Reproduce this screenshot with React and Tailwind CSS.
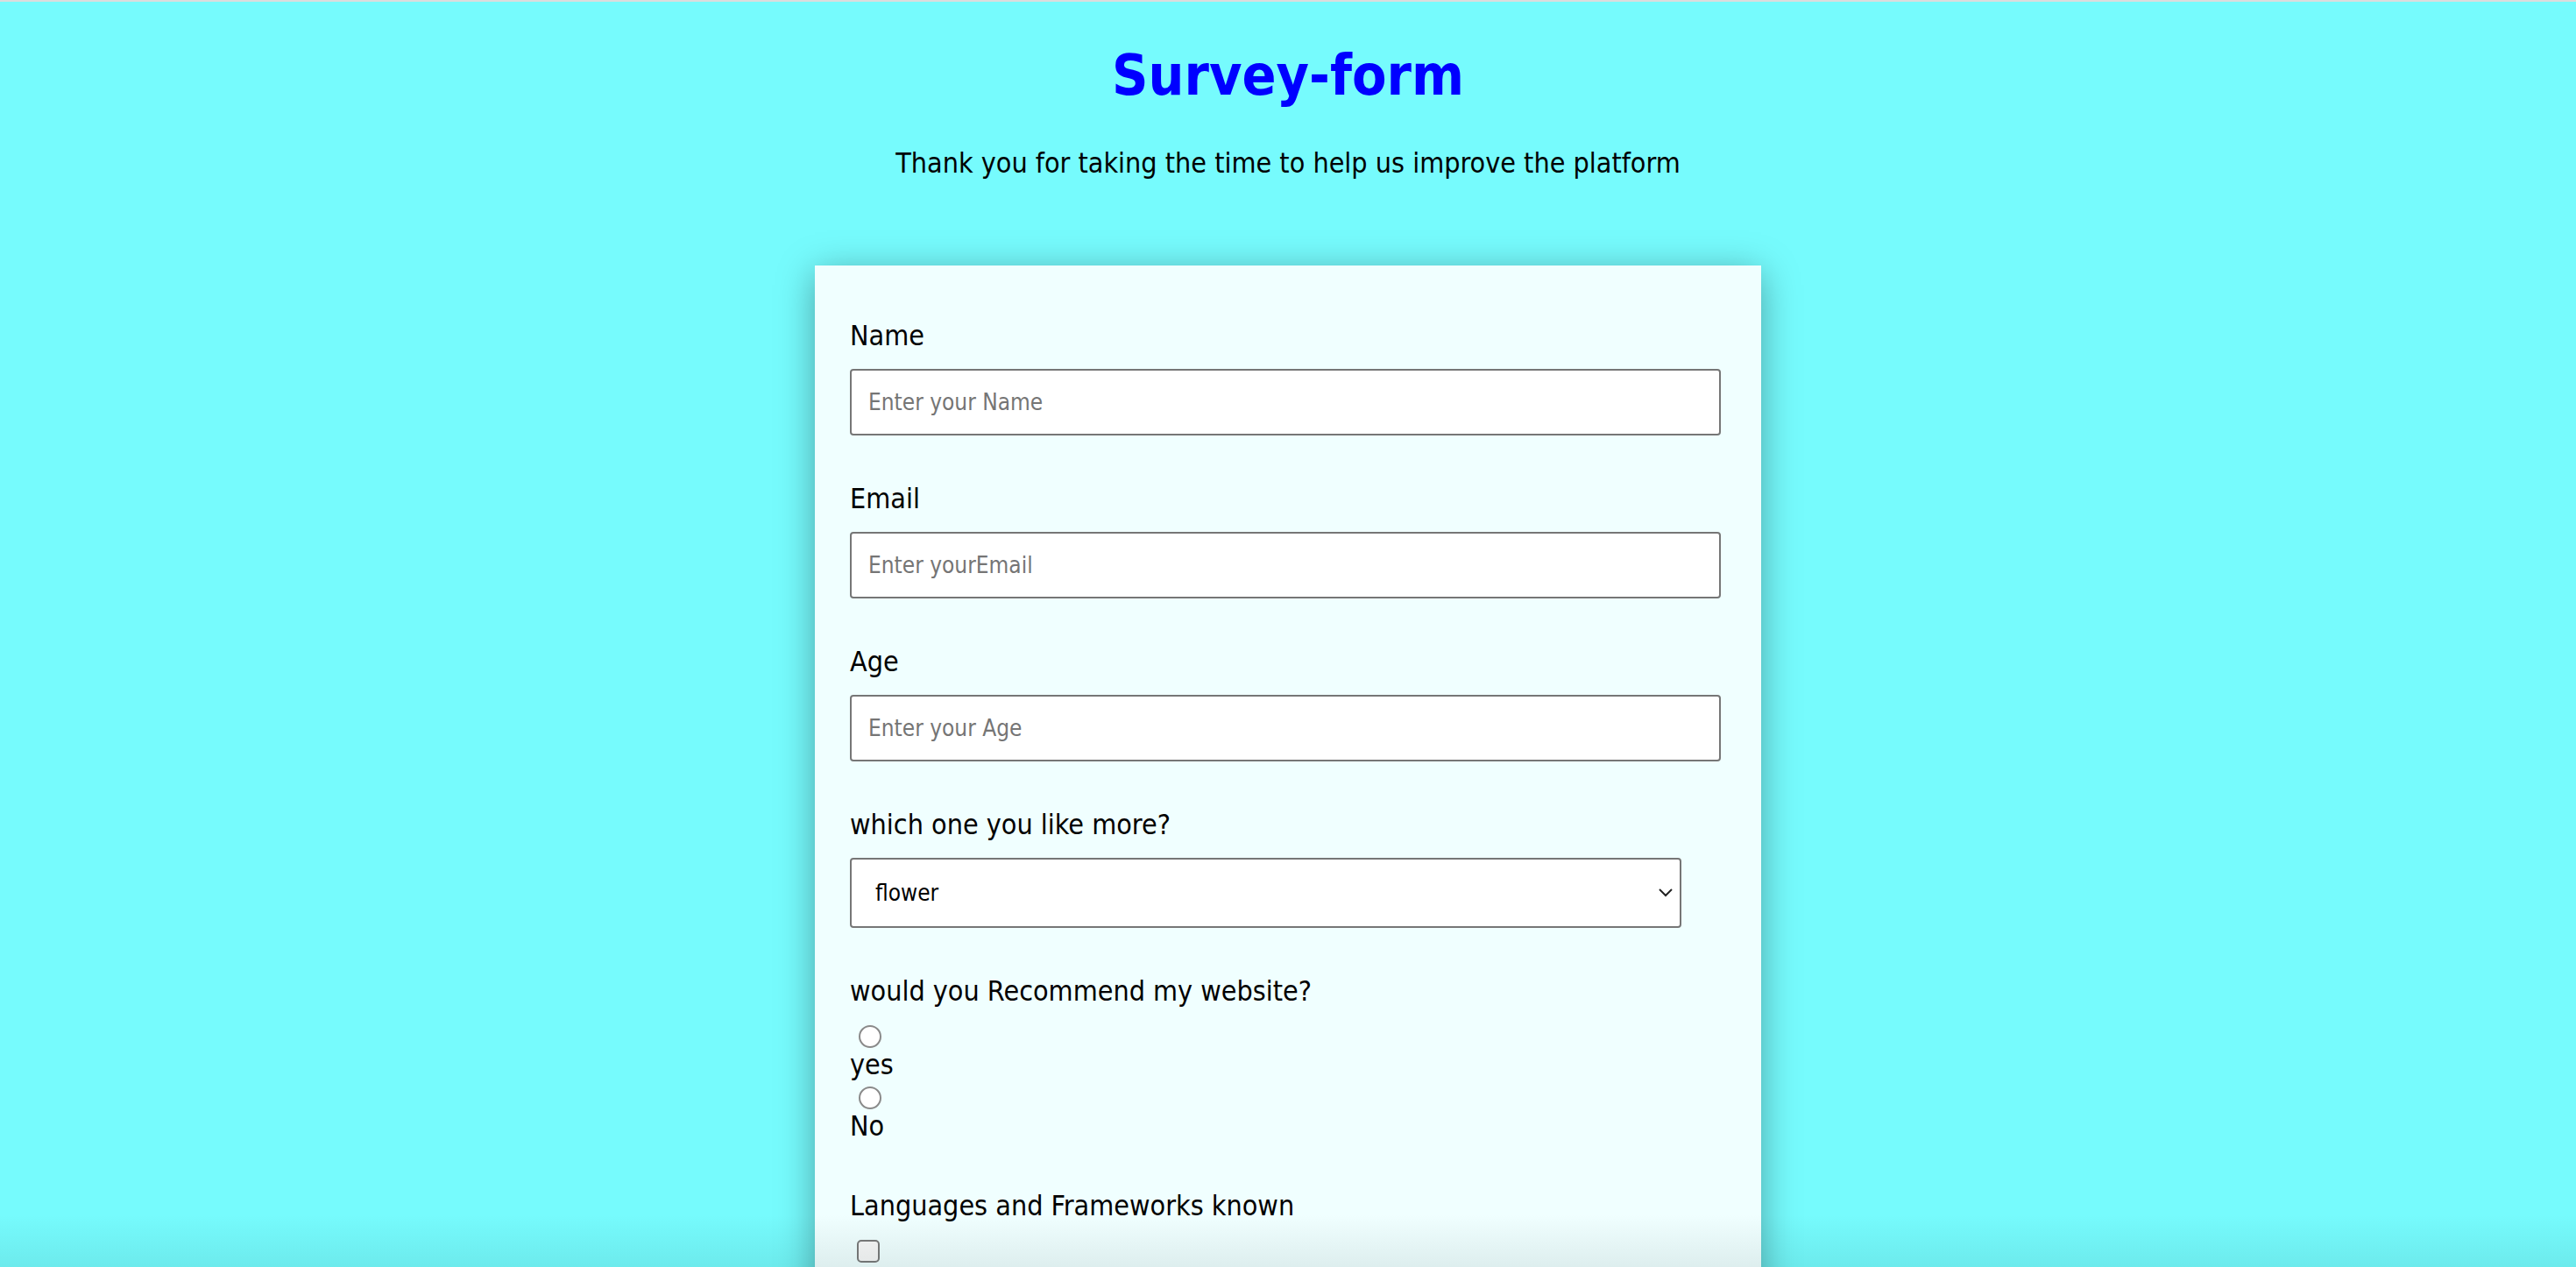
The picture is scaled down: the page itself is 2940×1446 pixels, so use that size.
import React from 'react';

const font = { fontFamily: '"DejaVu Sans Condensed", "DejaVu Sans", Tahoma, sans-serif' };

const TextField = ({ label, placeholder, type = 'text' }) => (
  <div className="flex flex-col">
    <label className="text-[32px] leading-[38px] text-black">{label}</label>
    <input
      type={type}
      placeholder={placeholder}
      className="mt-[19px] h-[76px] w-[994px] rounded-[4px] border-2 border-[#767676] bg-white pl-[19px] text-[26px] text-black placeholder:text-[#757575] outline-none"
    />
  </div>
);

const Radio = ({ name, label }) => (
  <>
    <input
      type="radio"
      name={name}
      className="mt-[6px] ml-[10px] block h-[26px] w-[26px] appearance-none rounded-full border-2 border-[#8a8a8a] bg-white"
    />
    <span className="block text-[32px] leading-[38px]">{label}</span>
  </>
);

const Check = ({ label }) => (
  <label className="flex items-center gap-3 text-[32px] leading-[38px]">
    <input
      type="checkbox"
      className="mt-[6px] ml-[8px] block h-[26px] w-[26px] appearance-none rounded-[5px] border-2 border-[#7a7a7a] bg-[#f7f7f7]"
    />
    <span>{label}</span>
  </label>
);

export default function App() {
  return (
    <div
      className="relative h-screen overflow-hidden border-t-2 border-[#dcdcdc] bg-[#76fbfd] text-black"
      style={font}
    >
      {/* Header */}
      <header className="flex flex-col items-center pt-[52px]">
        <h1 className="text-[64px] font-bold leading-none text-[#0000ff]">Survey-form</h1>
        <p className="mt-[49px] text-[32px] leading-[38px]">
          Thank you for taking the time to help us improve the platform
        </p>
      </header>

      {/* Form card */}
      <form className="mx-auto mt-[98px] w-[1080px] bg-[#f0ffff] px-[40px] pt-[61px] pb-[80px] shadow-[0_8px_40px_rgba(0,0,0,0.35)]">
        <div className="flex flex-col gap-[53px]">
          <TextField label="Name" placeholder="Enter your Name" />
          <TextField label="Email" placeholder="Enter yourEmail" type="email" />
          <TextField label="Age" placeholder="Enter your Age" type="number" />

          <div className="flex flex-col">
            <label className="text-[32px] leading-[38px]">which one you like more?</label>
            <div className="relative mt-[19px] w-[949px]">
              <select className="h-[80px] w-full appearance-none rounded-[4px] border-2 border-[#767676] bg-white pl-[27px] text-[26px] text-black outline-none">
                <option>flower</option>
                <option>tree</option>
                <option>sky</option>
              </select>
              <svg
                className="pointer-events-none absolute right-[10px] top-[33px]"
                width="16"
                height="12"
                viewBox="0 0 16 12"
                fill="none"
                stroke="#222"
                strokeWidth="2"
              >
                <path d="M1 3l7 7 7-7" />
              </svg>
            </div>
          </div>

          <div className="flex flex-col">
            <label className="text-[32px] leading-[38px]">would you Recommend my website?</label>
            <div className="mt-[14px]">
              <Radio name="recommend" label="yes" />
              <Radio name="recommend" label="No" />
            </div>
          </div>

          <div className="flex flex-col">
            <label className="text-[32px] leading-[38px]">Languages and Frameworks known</label>
            <div className="mt-[14px] flex flex-col">
              <Check label="" />
              <Check label="" />
              <Check label="" />
            </div>
          </div>
        </div>
      </form>

      {/* bottom fade */}
      <div className="pointer-events-none absolute inset-x-0 bottom-0 h-[60px] bg-gradient-to-b from-transparent to-[rgba(0,40,40,0.08)]" />
    </div>
  );
}
